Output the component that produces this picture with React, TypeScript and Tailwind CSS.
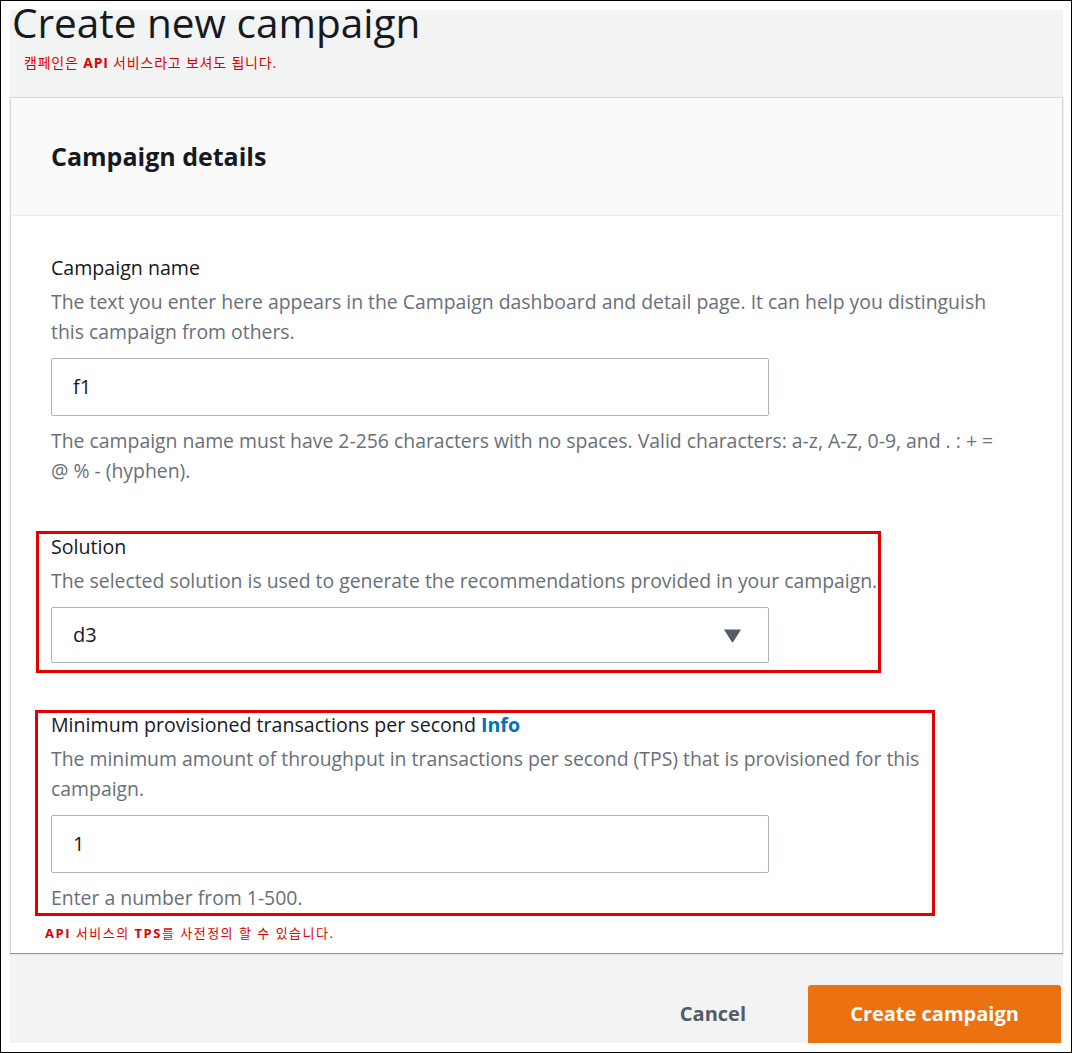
import React from 'react';

const FONT = { fontFamily: '"Open Sans", "Noto Sans CJK KR", sans-serif' };

type FieldProps = {
  label: React.ReactNode;
  description: React.ReactNode;
  children: React.ReactNode;
  hint?: React.ReactNode;
  className?: string;
};

function Field({ label, description, children, hint, className }: FieldProps) {
  return (
    <div className={`relative ${className ?? ''}`}>
      <div className="text-[19.6px] leading-[30px] text-[#16191f]">{label}</div>
      <p className="mt-[4px] text-[19.4px] leading-[30px] text-[#687078]">{description}</p>
      {children}
      {hint && <p className="mt-[10px] text-[19.4px] leading-[30px] text-[#687078]">{hint}</p>}
    </div>
  );
}

function TextBox({ value }: { value: string }) {
  return (
    <div className="mt-[11px] flex h-[58px] w-[718px] items-center rounded-[2px] border border-[#aab7b8] bg-white px-[21px] text-[20px] text-[#16191f]">
      {value}
    </div>
  );
}

export default function App() {
  return (
    <div className="h-[1053px] w-[1072px] border border-black bg-white pb-[9px] pl-[9px] pr-[8px] pt-[9px]" style={FONT}>
      <div className="flex h-full flex-col bg-[#f2f3f3]">
        {/* page header */}
        <div className="h-[87px] shrink-0">
          <h1 className="ml-[2px] mt-[1px] text-[40.5px] leading-[24px] text-[#16191f]">Create new campaign</h1>
          <p className="ml-[14px] mt-[19px] text-[14px] leading-[18px] tracking-[0.8px] text-[#e00000]">
            캠페인은 <b>API</b> 서비스라고 보셔도 됩니다.
          </p>
        </div>

        {/* card */}
        <div className="border-x border-t border-[#d5dbdb] bg-white shadow-[0_1px_1px_0_rgba(0,28,36,0.4)]">
          <div className="flex h-[118px] items-center border-b border-[#eaeded] bg-[#fafafa] pl-[40px]">
            <h2 className="text-[25px] font-bold text-[#16191f]">Campaign details</h2>
          </div>

          <div className="pb-[11px] pl-[40px] pr-[60px] pt-[37px]">
            <Field
              label="Campaign name"
              description="The text you enter here appears in the Campaign dashboard and detail page. It can help you distinguish this campaign from others."
              hint="The campaign name must have 2-256 characters with no spaces. Valid characters: a-z, A-Z, 0-9, and . : + = @ % - (hyphen)."
            >
              <TextBox value="f1" />
            </Field>

            <Field
              className="mt-[46px]"
              label="Solution"
              description="The selected solution is used to generate the recommendations provided in your campaign."
            >
              <div className="mt-[11px] flex h-[56px] w-[718px] items-center justify-between rounded-[2px] border border-[#aab7b8] bg-white pl-[21px] pr-[26px] text-[20px] text-[#16191f]">
                <span>d3</span>
                <svg width="19" height="15" viewBox="0 0 19 15">
                  <path d="M1 1.5 H18 L10.5 13.5 Q9.5 15 8.5 13.5 Z" fill="#545b64" />
                </svg>
              </div>
              <div className="pointer-events-none absolute -left-[15px] -top-[1px] h-[142px] w-[845px] border-[3px] border-[#e00000]" />
            </Field>

            <Field
              className="mt-[47px]"
              label={
                <>
                  Minimum provisioned transactions per second{' '}
                  <span className="font-bold text-[#0073bb]">Info</span>
                </>
              }
              description="The minimum amount of throughput in transactions per second (TPS) that is provisioned for this campaign."
              hint="Enter a number from 1-500."
            >
              <TextBox value="1" />
              <div className="pointer-events-none absolute -left-[16px] top-0 h-[206px] w-[900px] border-[3px] border-[#e00000]" />
            </Field>

            <p className="-ml-[6px] mt-[11px] text-[13px] leading-[18px] tracking-[1.5px] text-[#e00000]">
              <b>API</b> 서비스의 <b>TPS</b>를 사전정의 할 수 있습니다.
            </p>
          </div>
        </div>

        {/* actions */}
        <div className="mt-auto flex items-center justify-end pr-[2px]">
          <button className="mr-[62px] text-[20px] font-bold text-[#545b64]">Cancel</button>
          <button className="h-[58px] w-[253px] rounded-t-[3px] bg-[#ec7211] text-[20px] font-bold text-white">
            Create campaign
          </button>
        </div>
      </div>
    </div>
  );
}
